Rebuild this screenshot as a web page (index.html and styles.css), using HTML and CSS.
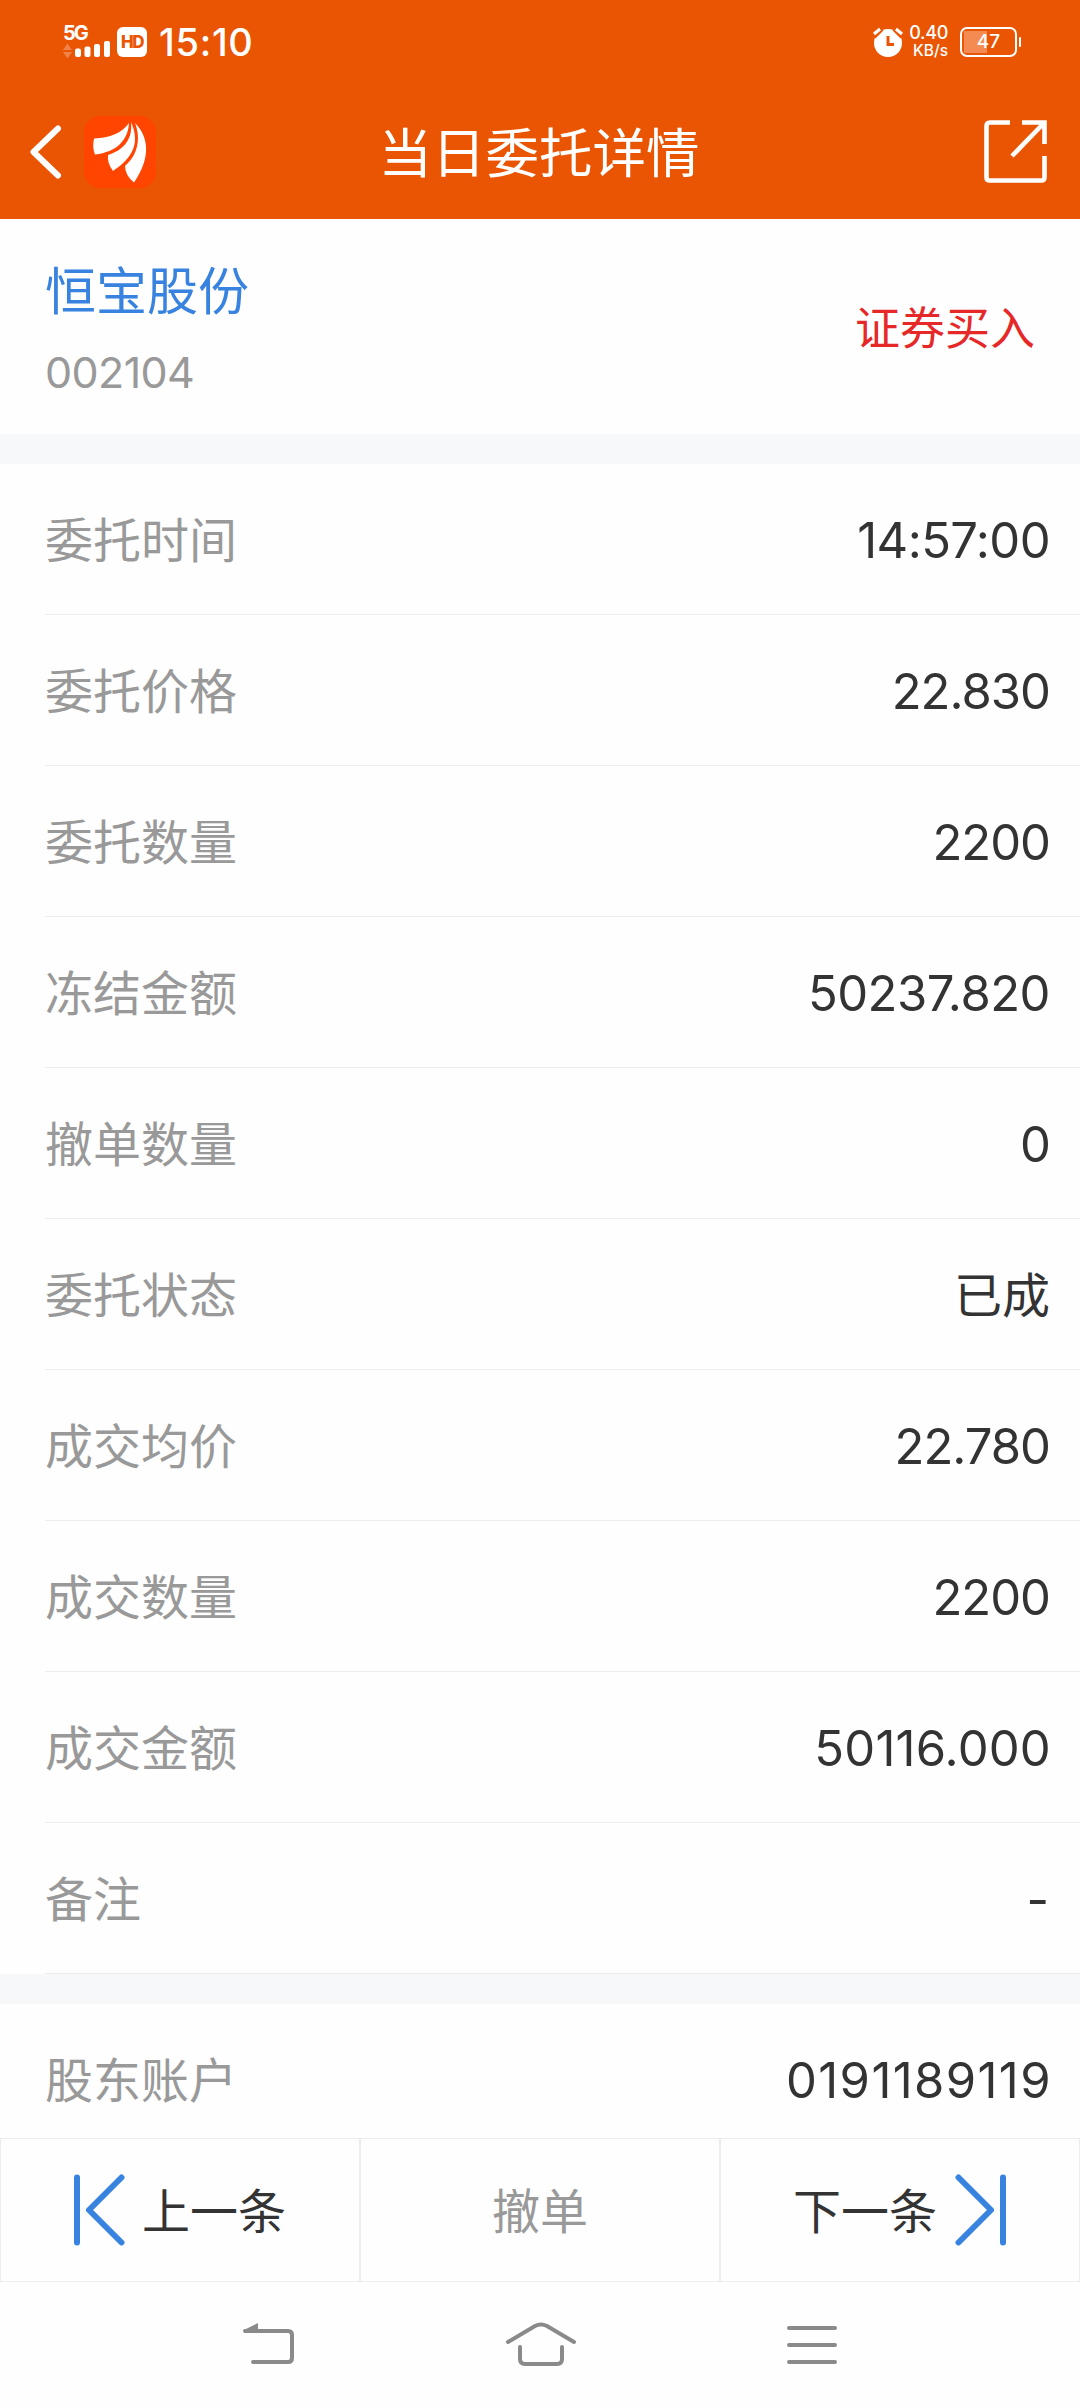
FILE: index.html
```html
<!DOCTYPE html>
<html lang="zh-CN">
<head>
    <meta charset="UTF-8">
    <meta name="viewport" content="width=device-width, initial-scale=1.0">
    <title>当日委托详情</title>
    <link rel="stylesheet" href="styles.css">
</head>
<body>
    <div class="page">
        <header class="header">
            <div class="status-bar">
                <div class="status-left">
                    <div class="signal">
                        <span class="network">5G</span>
                        <svg class="bars" width="48" height="18" viewBox="0 0 48 18">
                            <path d="M0 8l4.500-6.500L9 8zM0 10h9l-4.500 6.500z" fill="#f0824a"/>
                            <g fill="#fff">
                                <rect x="12" y="6.500" width="6" height="8.500" rx="2"/>
                                <rect x="21.500" y="4.500" width="6" height="10.500" rx="2"/>
                                <rect x="31" y="2" width="6" height="13" rx="2"/>
                                <rect x="41" y="-1" width="6" height="16" rx="2"/>
                            </g>
                        </svg>
                    </div>
                    <span class="hd">HD</span>
                    <span class="clock">15:10</span>
                </div>
                <div class="status-right">
                    <svg width="30" height="30" viewBox="0 0 30 30">
                        <circle cx="15" cy="16" r="14" fill="#fff"/>
                        <path d="M0 9L8 1M30 9L22 1" stroke="#ea5504" stroke-width="7"/>
                        <path d="M1 7l6-5M29 7l-6-5" stroke="#fff" stroke-width="3.200"/>
                        <path d="M15 9v8.500h6" fill="none" stroke="#ea5504" stroke-width="3"/>
                    </svg>
                    <div class="speed">
                        <span class="speed-num">0.40</span>
                        <span class="speed-unit">KB/s</span>
                    </div>
                    <div class="battery"><span>47</span></div>
                </div>
            </div>
            <div class="nav-bar">
                <div class="nav-left">
                    <svg width="32" height="54" viewBox="0 0 32 54">
                        <path d="M28 3.500L3.500 27 28 50.500" fill="none" stroke="#fff" stroke-width="6" stroke-linecap="round" stroke-linejoin="round"/>
                    </svg>
                    <svg class="logo" width="72" height="72" viewBox="0 0 72 72">
                        <rect width="72" height="72" rx="16" fill="#ff4500"/>
                        <g fill="#fff">
                            <path d="M45 7C44 24 33 36 11 38.500Q8 32 10 22.500C26 22 38 17 45 7z"/>
                            <path d="M47 6C56 26 50 41 29 55Q23 47 24 39C40 34 49 23 47 6z"/>
                            <path d="M51 7C65 21 67 42 50 66.500Q41 59 41 50C54 39 57 22 51 7z"/>
                        </g>
                    </svg>
                </div>
                <h1>当日委托详情</h1>
                <svg class="share" width="64" height="64" viewBox="0 0 64 64">
                    <path d="M26 2.500H6Q2.500 2.500 2.500 6v51.500Q2.500 60.500 6 60.500h51.500Q60.500 60.500 60.500 57V36M38 2.500h22.500V24M60 3L28 36" fill="none" stroke="#fff" stroke-width="4.600"/>
                </svg>
            </div>
        </header>

        <section class="stock">
            <div>
                <div class="stock-name">恒宝股份</div>
                <div class="stock-code">002104</div>
            </div>
            <div class="trade-type">证券买入</div>
        </section>

        <ul class="detail-list">
            <li><span class="label">委托时间</span><span class="value value-time">14:57:00</span></li>
            <li><span class="label">委托价格</span><span class="value">22.830</span></li>
            <li><span class="label">委托数量</span><span class="value">2200</span></li>
            <li><span class="label">冻结金额</span><span class="value value-frozen">50237.820</span></li>
            <li><span class="label">撤单数量</span><span class="value">0</span></li>
            <li><span class="label">委托状态</span><span class="value value-cn">已成</span></li>
            <li><span class="label">成交均价</span><span class="value">22.780</span></li>
            <li><span class="label">成交数量</span><span class="value">2200</span></li>
            <li><span class="label">成交金额</span><span class="value value-amount">50116.000</span></li>
            <li><span class="label">备注</span><span class="value value-empty">-</span></li>
        </ul>

        <ul class="detail-list account">
            <li><span class="label">股东账户</span><span class="value value-account">0191189119</span></li>
        </ul>

        <div class="actions">
            <div class="action prev">
                <svg width="52" height="72" viewBox="0 0 52 72">
                    <path d="M4 3.500v65M48.500 3.500L16 36l32.500 32.500" fill="none" stroke="#3882e0" stroke-width="6" stroke-linecap="round" stroke-linejoin="round"/>
                </svg>
                <span>上一条</span>
            </div>
            <div class="action disabled"><span>撤单</span></div>
            <div class="action next">
                <span>下一条</span>
                <svg width="52" height="72" viewBox="0 0 52 72">
                    <path d="M48 3.500v65M3.500 3.500L36 36 3.500 68.500" fill="none" stroke="#3882e0" stroke-width="6" stroke-linecap="round" stroke-linejoin="round"/>
                </svg>
            </div>
        </div>

        <div class="system-nav">
            <svg width="52" height="44" viewBox="0 0 52 44">
                <path d="M2 9h43q4 0 4 4v23q0 4-4 4H10" fill="none" stroke="#8a8a8a" stroke-width="4" stroke-linecap="round"/>
                <path d="M1 8L15 1v9H2z" fill="#8a8a8a"/>
            </svg>
            <svg width="72" height="44" viewBox="0 0 72 44">
                <path d="M3 20L30 4q6-3 12 0l27 16M15 25v12q0 5 5 5h32q5 0 5-5V25" fill="none" stroke="#8a8a8a" stroke-width="4" stroke-linecap="round"/>
            </svg>
            <svg width="50" height="44" viewBox="0 0 50 44">
                <path d="M2 6h46M2 23h46M2 40h46" stroke="#8a8a8a" stroke-width="4" stroke-linecap="round"/>
            </svg>
        </div>
    </div>
</body>
</html>
```
FILE: styles.css
```css
* {
    margin: 0;
    padding: 0;
    box-sizing: border-box;
}

body {
    font-family: Inter, "Noto Sans CJK SC", sans-serif;
    background: #fefefe;
    color: #333;
}

svg {
    display: block;
    flex: none;
}

.page {
    width: 1080px;
    height: 2408px;
    display: flex;
    flex-direction: column;
    overflow: hidden;
}

.header {
    height: 219px;
    background: #ea5504;
    color: #fff;
}

.status-bar {
    height: 84px;
    padding: 0 60px 0 63px;
    display: flex;
    justify-content: space-between;
    align-items: center;
}

.status-left,
.status-right {
    display: flex;
    align-items: center;
}

.signal {
    display: flex;
    flex-direction: column;
}

.network {
    height: 17px;
    font-size: 20px;
    line-height: 17px;
    font-weight: 700;
    letter-spacing: -2px;
}

.bars {
    overflow: visible;
}

.hd {
    width: 30px;
    height: 30px;
    margin-left: 6px;
    border-radius: 6px;
    background: #fff;
    color: #ea5504;
    font-size: 17px;
    line-height: 30px;
    font-weight: 800;
    text-align: center;
    letter-spacing: -1.5px;
}

.clock {
    margin-left: 12px;
    font-size: 38px;
    line-height: 46px;
    font-weight: 500;
    letter-spacing: 0.7px;
}

.speed {
    width: 39px;
    margin-left: 6px;
    display: flex;
    flex-direction: column;
    align-items: flex-end;
    font-weight: 500;
}

.speed-num {
    height: 17px;
    font-size: 18px;
    line-height: 16px;
    letter-spacing: -0.3px;
}

.speed-unit {
    height: 17px;
    font-size: 15.5px;
    line-height: 18px;
}

.battery {
    position: relative;
    width: 57px;
    height: 30px;
    margin: 0 3px 0 12px;
    border: 2.5px solid #fff;
    border-radius: 7px;
    background: linear-gradient(#f38b53, #f38b53) 2px 2px / 23px 22px no-repeat;
    font-size: 19px;
    line-height: 26px;
    font-weight: 500;
    text-align: center;
}

.battery::after {
    content: "";
    position: absolute;
    top: 8px;
    right: -6px;
    width: 2px;
    height: 10px;
    border-radius: 1px;
    background: #fff;
}

.nav-bar {
    height: 135px;
    padding: 0 32px 0 30px;
    display: flex;
    justify-content: space-between;
    align-items: center;
}

.nav-left {
    width: 260px;
    display: flex;
    align-items: center;
    gap: 22px;
}

.nav-bar h1 {
    padding-top: 5px;
    font-size: 53.5px;
    line-height: 80px;
    font-weight: 400;
}

.share {
    margin-left: 196px;
}

.stock {
    height: 215px;
    padding: 0 45px;
    display: flex;
    justify-content: space-between;
    align-items: center;
}

.stock-name {
    padding-top: 10px;
    font-size: 51px;
    line-height: 74px;
    color: #3882e0;
}

.stock-code {
    margin-top: 6px;
    font-size: 43px;
    line-height: 74px;
    color: #999;
    letter-spacing: -0.6px;
}

.trade-type {
    padding-top: 5px;
    font-size: 45px;
    line-height: 66px;
    color: #e62828;
}

.detail-list {
    list-style: none;
    border-top: 30px solid #f7f8fa;
}

.detail-list li {
    height: 151px;
    padding: 3px 30px 0 45px;
    display: flex;
    justify-content: space-between;
    align-items: center;
    background: linear-gradient(#ededed, #ededed) 45px 100% / 1035px 1px no-repeat;
}

.label {
    font-size: 48px;
    line-height: 70px;
    color: #999;
}

.value {
    font-size: 49px;
    line-height: 70px;
    letter-spacing: -1px;
}

.value-time {
    letter-spacing: -0.6px;
}

.value-frozen {
    letter-spacing: -0.5px;
}

.value-amount {
    letter-spacing: 0.2px;
    margin-right: -1px;
}

.value-account {
    letter-spacing: 1.4px;
    margin-right: -2px;
}

.value-empty {
    margin-right: 2px;
}

.value-cn {
    font-size: 48px;
    letter-spacing: 0;
}

.account {
    height: 164px;
    overflow: hidden;
}

.actions {
    display: flex;
}

.action {
    width: 360px;
    height: 144px;
    display: flex;
    align-items: center;
    border: 1px solid #ededed;
    font-size: 48px;
    line-height: 70px;
}

.action span {
    padding-top: 3px;
}

.prev {
    padding-left: 72px;
    gap: 17px;
}

.next {
    justify-content: flex-end;
    padding-right: 72px;
    gap: 18px;
}

.disabled {
    justify-content: center;
    color: #999;
}

.system-nav {
    flex: 1;
    display: flex;
    align-items: center;
    padding: 0 243px 2px;
    justify-content: space-between;
}
```
